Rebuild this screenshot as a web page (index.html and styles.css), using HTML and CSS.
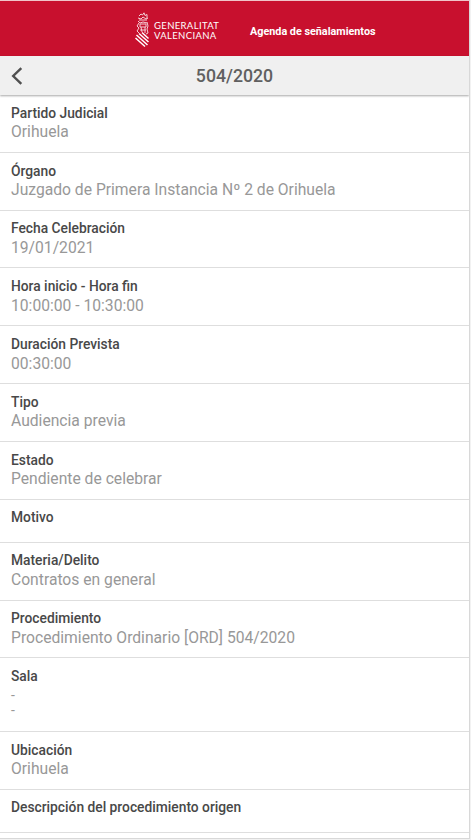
FILE: index.html
```
<!DOCTYPE html>
<html lang="es">
<head>
  <meta charset="UTF-8">
  <meta name="viewport" content="width=device-width, initial-scale=1.0">
  <title>Agenda de señalamientos</title>
  <link rel="stylesheet" href="styles.css">
</head>
<body>
  <div class="app">

    <!-- Top bar -->
    <header class="top-bar">
      <div class="logo">
        <svg class="logo-mark" width="16" height="36" viewBox="0 0 16 36" fill="none" stroke="#fff">
          <g stroke-width="1" opacity="0.8">
            <path d="M4 4l2-2 1.500 1L9 0.800l1 2.700 2-1v4M3 6l3 1 2-2 3 2 2-1M4 8h8M3 9l2 2 3-1 4 1"/>
            <path d="M4 11l-2 3 2 2-2 3 2 2M12 10l1 4-1 3 1 4-2 1M5 12h6v3H5zM6 15l1 5M10 15v6M5 18h6"/>
          </g>
          <path stroke-width="1.5" d="M7 20.500l6.500 6M4 21.500l9.500 8.500M1.500 23l11 10M0.500 26l9.500 8.500"/>
        </svg>
        <div class="logo-text">
          <span class="logo-line">GENERALITAT</span>
          <span class="logo-line">VALENCIANA</span>
        </div>
      </div>
      <h1 class="app-title">Agenda de señalamientos</h1>
    </header>

    <!-- Record title -->
    <div class="title-bar">
      <button class="back-button" aria-label="Volver">
        <svg width="12" height="18" viewBox="0 0 12 18" fill="none" stroke="#505050" stroke-width="2.4">
          <path d="M10.300 1.200L2.200 9l8.100 7.800"/>
        </svg>
      </button>
      <h2 class="record-title">504/2020</h2>
    </div>

    <!-- Record details -->
    <main class="details">
      <div class="item">
        <div class="label">Partido Judicial</div>
        <div class="value">Orihuela</div>
      </div>
      <div class="item">
        <div class="label">Órgano</div>
        <div class="value">Juzgado de Primera Instancia Nº 2 de Orihuela</div>
      </div>
      <div class="item">
        <div class="label">Fecha Celebración</div>
        <div class="value">19/01/2021</div>
      </div>
      <div class="item">
        <div class="label">Hora inicio - Hora fin</div>
        <div class="value">10:00:00 - 10:30:00</div>
      </div>
      <div class="item">
        <div class="label">Duración Prevista</div>
        <div class="value">00:30:00</div>
      </div>
      <div class="item">
        <div class="label">Tipo</div>
        <div class="value">Audiencia previa</div>
      </div>
      <div class="item">
        <div class="label">Estado</div>
        <div class="value">Pendiente de celebrar</div>
      </div>
      <div class="item item-empty">
        <div class="label">Motivo</div>
      </div>
      <div class="item">
        <div class="label">Materia/Delito</div>
        <div class="value">Contratos en general</div>
      </div>
      <div class="item">
        <div class="label">Procedimiento</div>
        <div class="value">Procedimiento Ordinario [ORD] 504/2020</div>
      </div>
      <div class="item item-double">
        <div class="label">Sala</div>
        <div class="value">-</div>
        <div class="value">-</div>
      </div>
      <div class="item">
        <div class="label">Ubicación</div>
        <div class="value">Orihuela</div>
      </div>
      <div class="item item-empty">
        <div class="label">Descripción del procedimiento origen</div>
      </div>
    </main>

  </div>
</body>
</html>
```
FILE: styles.css
```
* {
  box-sizing: border-box;
}

body {
  margin: 0;
  font-family: Roboto, sans-serif;
  background-color: #f2f2f2;
}

.app {
  display: flex;
  flex-direction: column;
  width: 470px;
  height: 839px;
  background-color: #fff;
  border-top: 1px solid #f0c4c9;
  border-right: 1px solid #d8d8d8;
  border-bottom: 1px solid #d8d8d8;
  overflow: hidden;
}

/* Top bar */
.top-bar {
  display: flex;
  align-items: center;
  flex-shrink: 0;
  height: 55px;
  padding-left: 135px;
  background-color: #c8102e;
  color: #fff;
}

.logo {
  display: flex;
  width: 115px;
  padding-top: 3px;
}

.logo-mark {
  flex-shrink: 0;
}

.logo-text {
  padding: 8.5px 0 0 3px;
}

.logo-line {
  display: block;
  font-family: Lato, sans-serif;
  font-size: 9.5px;
  line-height: 10px;
  letter-spacing: 0.35px;
}

.app-title {
  margin: 6px 0 0;
  font-size: 10.8px;
  font-weight: 700;
}

/* Title bar with the back arrow */
.title-bar {
  display: grid;
  grid-template-columns: 40px 1fr 40px;
  align-items: center;
  flex-shrink: 0;
  height: 39px;
  background-color: #f0f0f0;
  box-shadow: 0 1px 2px rgba(0, 0, 0, 0.35);
  z-index: 1;
}

.back-button {
  display: flex;
  padding: 0 0 0 11px;
  border: none;
  background: none;
}

.record-title {
  margin: 0;
  font-size: 17.7px;
  font-weight: 500;
  color: #606060;
  text-align: center;
}

/* Details list */
.item {
  height: 57.82px;
  padding: 9.7px 11px 0;
  border-bottom: 1px solid #dedede;
}

.item-empty {
  height: 43px;
}

.item-double {
  height: 73.6px;
}

.label {
  font-size: 13.8px;
  font-weight: 500;
  line-height: 17px;
  color: #484848;
}

.value {
  margin-top: 1.6px;
  font-size: 15.66px;
  line-height: 18px;
  color: #989898;
}

.item-double .value {
  margin-top: 0;
  font-size: 14px;
  line-height: 15.5px;
}

.item-double .label {
  margin-bottom: 2.5px;
}
```
